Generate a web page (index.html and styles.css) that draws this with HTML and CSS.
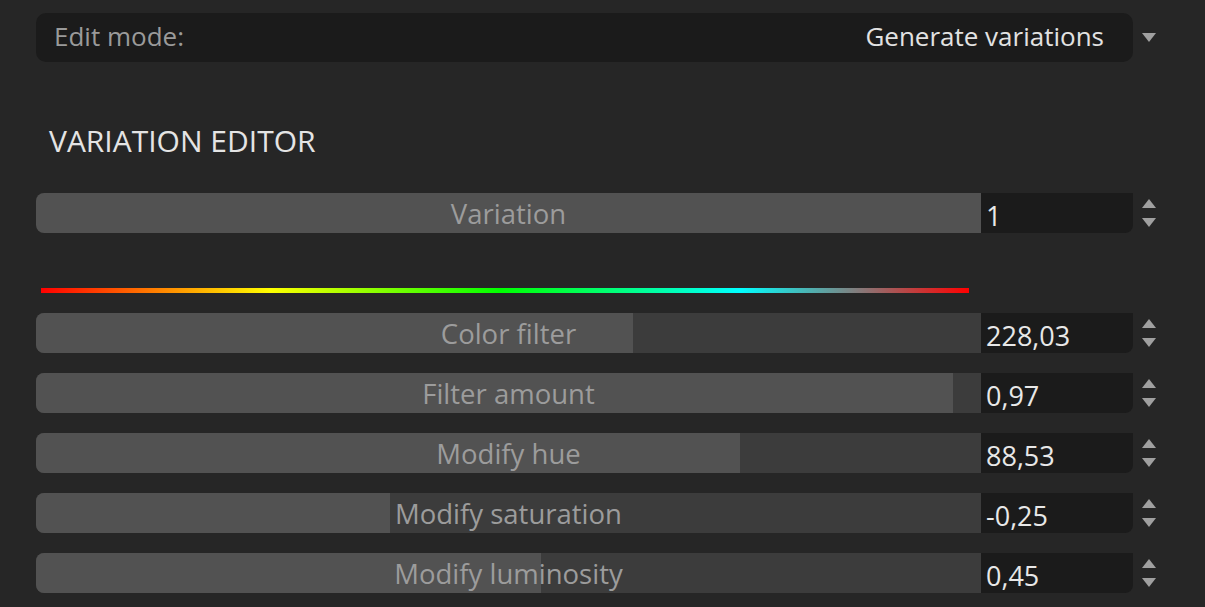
FILE: index.html
```html
<!DOCTYPE html>
<html>
<head>
<meta charset="utf-8">
<link rel="stylesheet" href="styles.css">
</head>
<body>
<div class="panel">
  <div class="row top-row">
    <div class="dropdown">
      <span class="dd-label">Edit mode:</span>
      <span class="dd-value">Generate variations</span>
    </div>
    <div class="dd-arrow"></div>
  </div>

  <div class="heading">VARIATION EDITOR</div>

  <div class="row slider-row">
    <div class="slider"><div class="fill" style="width:100%"></div><span class="label">Variation</span></div>
    <div class="value">1</div>
    <div class="spin"><span class="up"></span><span class="down"></span></div>
  </div>

  <div class="hue-bar"></div>

  <div class="sliders">
    <div class="row slider-row">
      <div class="slider"><div class="fill" style="width:597px"></div><span class="label">Color filter</span></div>
      <div class="value">228,03</div>
      <div class="spin"><span class="up"></span><span class="down"></span></div>
    </div>
    <div class="row slider-row">
      <div class="slider"><div class="fill" style="width:917px"></div><span class="label">Filter amount</span></div>
      <div class="value">0,97</div>
      <div class="spin"><span class="up"></span><span class="down"></span></div>
    </div>
    <div class="row slider-row">
      <div class="slider"><div class="fill" style="width:704px"></div><span class="label">Modify hue</span></div>
      <div class="value">88,53</div>
      <div class="spin"><span class="up"></span><span class="down"></span></div>
    </div>
    <div class="row slider-row">
      <div class="slider"><div class="fill" style="width:354px"></div><span class="label">Modify saturation</span></div>
      <div class="value">-0,25</div>
      <div class="spin"><span class="up"></span><span class="down"></span></div>
    </div>
    <div class="row slider-row">
      <div class="slider"><div class="fill" style="width:505px"></div><span class="label">Modify luminosity</span></div>
      <div class="value">0,45</div>
      <div class="spin"><span class="up"></span><span class="down"></span></div>
    </div>
  </div>
</div>
</body>
</html>
```

FILE: styles.css
```css
html, body {
  margin: 0;
  padding: 0;
  background: #262626;
  height: 100%;
  overflow: hidden;
}

.panel {
  padding: 13px 0 0 36px;
  font-family: "Open Sans", "Noto Sans", sans-serif;
  font-size: 26px;
}

.row {
  display: flex;
  align-items: center;
}

.dropdown {
  width: 1097px;
  height: 49px;
  box-sizing: border-box;
  background: #1b1b1b;
  border-radius: 10px;
  display: flex;
  align-items: center;
  justify-content: space-between;
  padding: 0 29px 4px 18px;
}

.dd-label {
  color: #9a9a9a;
}

.dd-value {
  color: #e2e2e2;
}

.dd-arrow {
  margin-left: 9px;
  width: 0;
  height: 0;
  border-left: 7px solid transparent;
  border-right: 7px solid transparent;
  border-top: 9px solid #a0a0a0;
}

.heading {
  color: #e4e4e4;
  font-size: 30px;
  margin: 59px 0 0 13px;
  line-height: 40px;
  height: 40px;
}

.slider-row {
  height: 40px;
}

.heading + .slider-row {
  margin-top: 32px;
}

.slider {
  position: relative;
  width: 945px;
  height: 40px;
  background: #3c3c3c;
  border-radius: 8px 0 0 8px;
  overflow: hidden;
}

.fill {
  height: 100%;
  background: #525252;
}

.label {
  position: absolute;
  left: 0;
  right: 0;
  top: 1px;
  line-height: 40px;
  text-align: center;
  color: #9c9c9c;
  font-size: 27.5px;
}

.value {
  width: 152px;
  height: 40px;
  box-sizing: border-box;
  background: #1b1b1b;
  border-radius: 0 0 8px 0;
  color: #e8e8e8;
  line-height: 40px;
  padding: 3px 0 0 5px;
  font-size: 27px;
}

.spin {
  margin-left: 9px;
  display: flex;
  flex-direction: column;
  gap: 10px;
}

.spin .up {
  width: 0;
  height: 0;
  border-left: 7px solid transparent;
  border-right: 7px solid transparent;
  border-bottom: 9px solid #a0a0a0;
}

.spin .down {
  width: 0;
  height: 0;
  border-left: 7px solid transparent;
  border-right: 7px solid transparent;
  border-top: 9px solid #a0a0a0;
}

.hue-bar {
  margin: 55px 0 0 5px;
  width: 928px;
  height: 5px;
  background: linear-gradient(to right, #ff0000 0%, #ffff00 24.7%, #00ff00 49.5%, #00ffff 75.3%, #ff0000 100%);
}

.sliders {
  margin-top: 20px;
  display: flex;
  flex-direction: column;
  gap: 20px;
}
```
